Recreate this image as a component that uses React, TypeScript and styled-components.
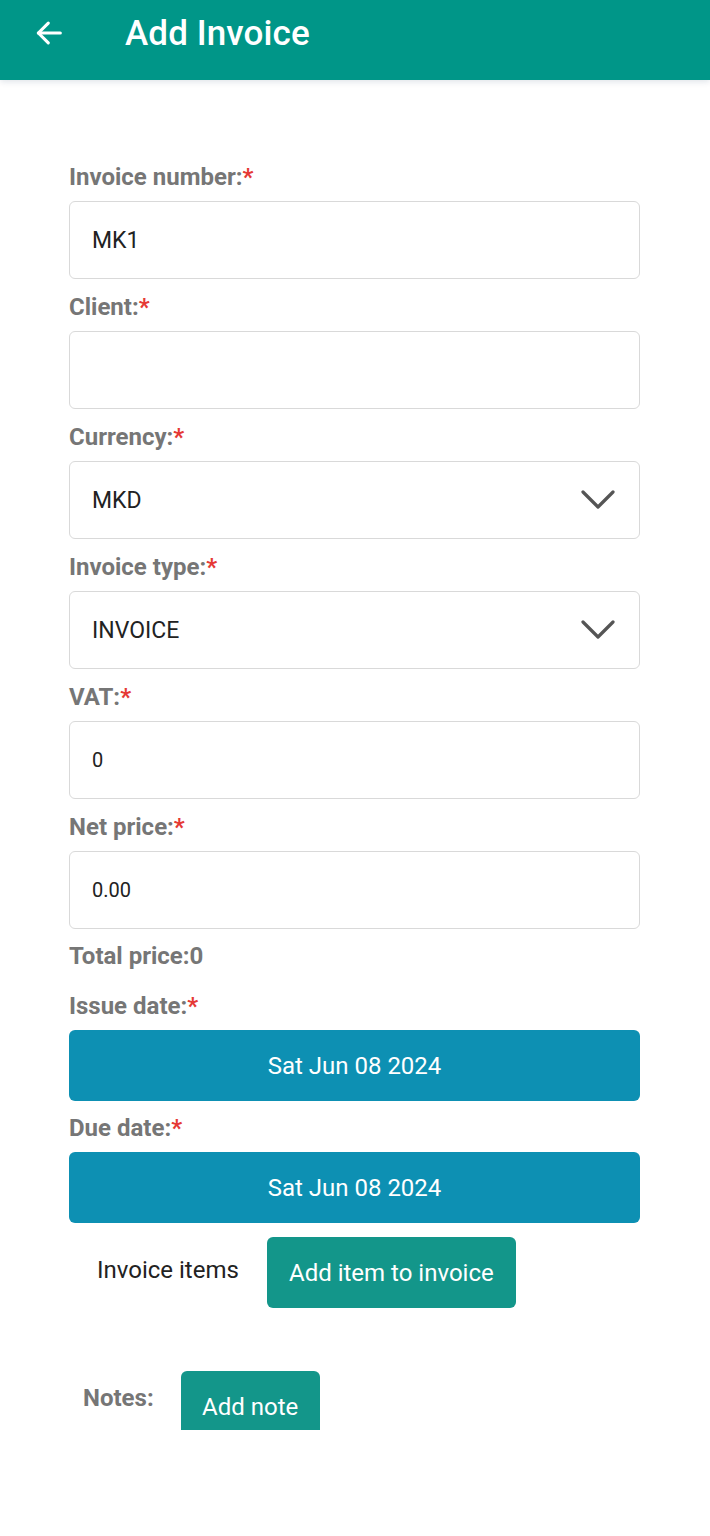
import React from "react";
import styled, { createGlobalStyle } from "styled-components";

const Global = createGlobalStyle`
  html, body { margin: 0; padding: 0; background: #fff; }
  body { font-family: Roboto, "Noto Sans", Arial, sans-serif; }
  * { box-sizing: border-box; }
`;

const Page = styled.div`
  width: 710px;
  min-height: 1536px;
  background: #fff;
`;

const Header = styled.header`
  height: 80px;
  background: #009688;
  display: flex;
  align-items: center;
  padding: 0 0 0 31px;
  box-shadow: 0 2px 6px rgba(0, 40, 80, 0.12);
  position: relative;
  z-index: 1;
`;

const BackButton = styled.button`
  background: none;
  border: none;
  padding: 0;
  width: 36px;
  height: 36px;
  display: flex;
  align-items: center;
  justify-content: center;
  margin-top: -14px;
`;

const Title = styled.h1`
  margin: -14px 0 0 58px;
  color: #fff;
  font-size: 35px;
  font-weight: 500;
  letter-spacing: 0.1px;
`;

const Form = styled.div`
  padding: 83px 70px 0 69px;
  height: 1350px;
  overflow: hidden;
  display: flex;
  flex-direction: column;
`;

const Field = styled.div<{ $gap?: number }>`
  display: flex;
  flex-direction: column;
  margin-bottom: ${(p) => p.$gap ?? 14}px;
`;

const Label = styled.label`
  font-size: 24px;
  line-height: 28px;
  font-weight: 700;
  color: #767676;
  margin-bottom: 10px;
`;

const Star = styled.span`
  color: #e53935;
`;

const InputBox = styled.div`
  height: 78px;
  border: 1.5px solid #d9d9d9;
  border-radius: 6px;
  display: flex;
  align-items: center;
  justify-content: space-between;
  padding: 0 24px 0 22px;
`;

const Value = styled.span<{ $small?: boolean }>`
  font-size: ${(p) => (p.$small ? "20px" : "23px")};
  color: #222;
`;

const TotalLine = styled.div`
  font-size: 24px;
  line-height: 28px;
  font-weight: 700;
  color: #767676;
  margin-bottom: 22px;
  margin-top: -1px;
`;

const DateButton = styled.button`
  height: 71px;
  width: 100%;
  border: none;
  border-radius: 6px;
  background: #0d90b3;
  color: #fff;
  font-family: inherit;
  font-size: 24px;
`;

const ItemsRow = styled.div`
  display: flex;
  align-items: center;
  gap: 28px;
  padding-left: 28px;
`;

const ItemsText = styled.span`
  font-size: 24px;
  color: #222;
  margin-top: -5px;
`;

const TealButton = styled.button<{ $w: number }>`
  height: 71px;
  width: ${(p) => p.$w}px;
  flex: none;
  border: none;
  border-radius: 6px;
  background: #13968a;
  color: #fff;
  font-family: inherit;
  font-size: 24px;
`;

const NotesRow = styled.div`
  display: flex;
  align-items: flex-start;
  gap: 27px;
  padding-left: 14px;
  margin-top: 63px;
`;

const NotesLabel = styled.span`
  font-size: 24px;
  line-height: 28px;
  font-weight: 700;
  color: #767676;
  margin-top: 13px;
`;

const Chevron = () => (
  <svg width="34" height="22" viewBox="0 0 34 22" fill="none">
    <polyline points="2,3 17,18 32,3" stroke="#555" strokeWidth="3.2" strokeLinecap="round" strokeLinejoin="round" />
  </svg>
);

const Arrow = () => (
  <svg width="34" height="34" viewBox="0 0 24 24" fill="none" stroke="#fff" strokeWidth="2.2" strokeLinecap="round" strokeLinejoin="round">
    <path d="M20 12H4.5" />
    <path d="M11.5 19l-7-7 7-7" />
  </svg>
);

const fields: { label: string; value: string; select?: boolean; small?: boolean }[] = [
  { label: "Invoice number:", value: "MK1" },
  { label: "Client:", value: "" },
  { label: "Currency:", value: "MKD", select: true },
  { label: "Invoice type:", value: "INVOICE", select: true },
  { label: "VAT:", value: "0", small: true },
  { label: "Net price:", value: "0.00", small: true },
];

export default function App() {
  return (
    <Page>
      <Global />
      <Header>
        <BackButton aria-label="Back">
          <Arrow />
        </BackButton>
        <Title>Add Invoice</Title>
      </Header>
      <Form>
        {fields.map((f) => (
          <Field key={f.label}>
            <Label>
              {f.label}
              <Star>*</Star>
            </Label>
            <InputBox>
              <Value $small={f.small}>{f.value}</Value>
              {f.select && <Chevron />}
            </InputBox>
          </Field>
        ))}
        <TotalLine>Total price:0</TotalLine>
        <Field $gap={13}>
          <Label>
            Issue date:<Star>*</Star>
          </Label>
          <DateButton>Sat Jun 08 2024</DateButton>
        </Field>
        <Field $gap={14}>
          <Label>
            Due date:<Star>*</Star>
          </Label>
          <DateButton>Sat Jun 08 2024</DateButton>
        </Field>
        <ItemsRow>
          <ItemsText>Invoice items</ItemsText>
          <TealButton $w={249}>Add item to invoice</TealButton>
        </ItemsRow>
        <NotesRow>
          <NotesLabel>Notes:</NotesLabel>
          <TealButton $w={139}>Add note</TealButton>
        </NotesRow>
      </Form>
    </Page>
  );
}
